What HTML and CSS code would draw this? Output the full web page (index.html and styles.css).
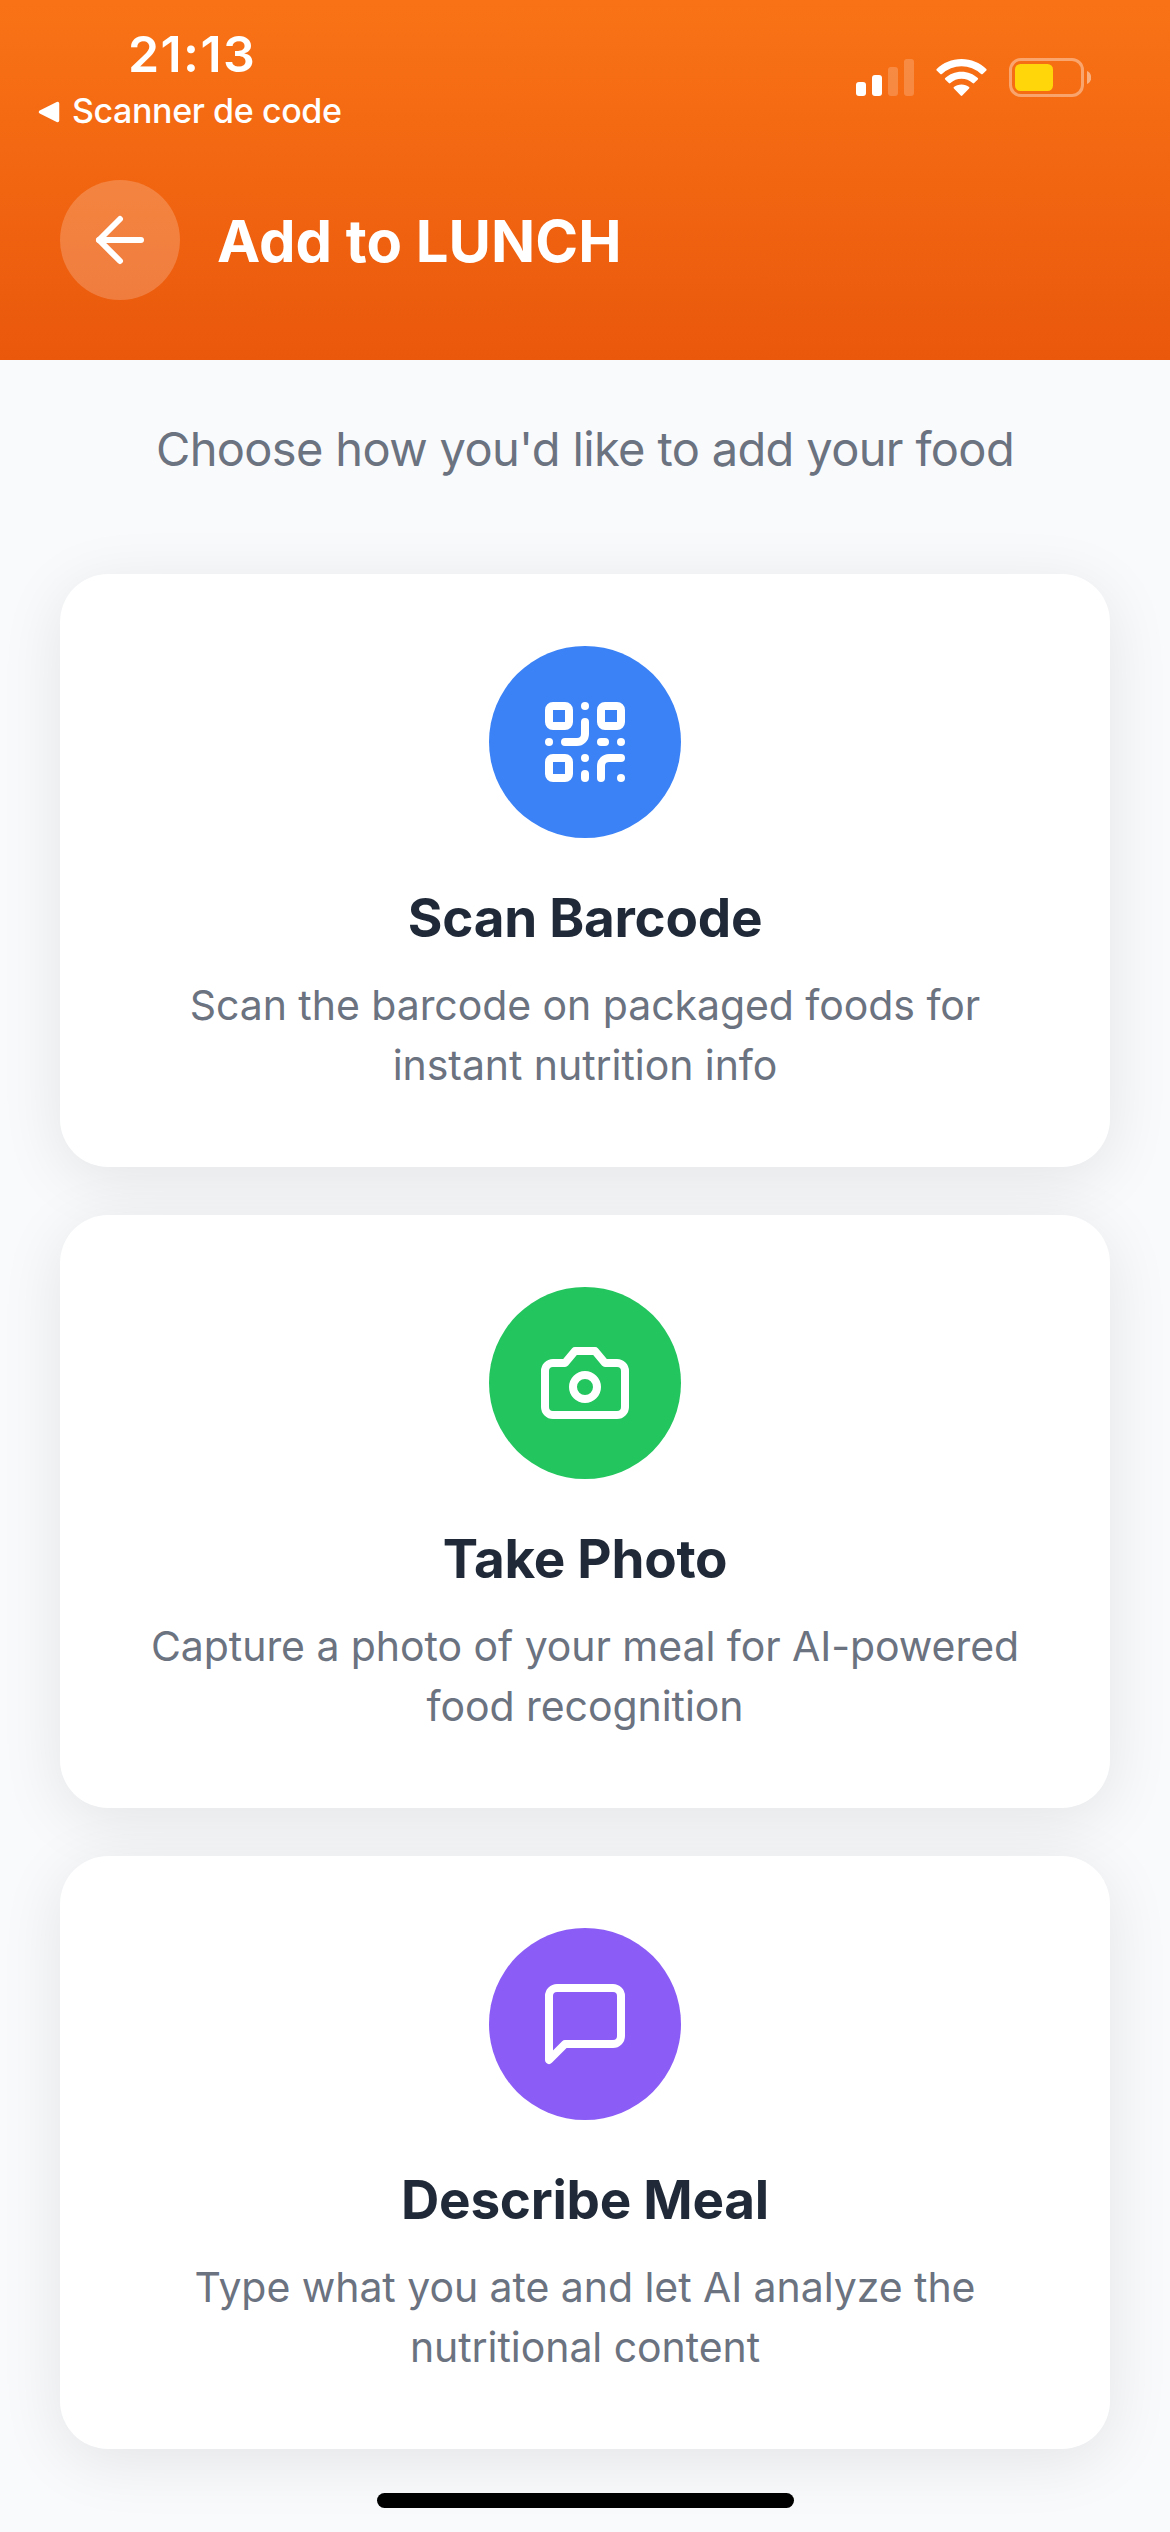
FILE: index.html
```html
<!DOCTYPE html>
<html lang="en">
<head>
<meta charset="utf-8">
<title>Add to LUNCH</title>
<link rel="stylesheet" href="styles.css">
</head>
<body>
<div class="screen">
  <header class="header">
    <div class="status-bar">
      <div class="status-left">
        <div class="time">21:13</div>
        <div class="return-link">
          <svg class="return-arrow" viewBox="0 0 22 22"><path d="M19.5 2.5v17L2.5 11z" fill="#fff" stroke="#fff" stroke-width="3.5" stroke-linejoin="round"/></svg>
          <span>Scanner de code</span>
        </div>
      </div>
      <div class="status-right">
        <svg width="58" height="39" viewBox="0 0 58 39" fill="#fff">
          <rect x="0" y="24" width="10" height="14" rx="3"/>
          <rect x="16" y="17" width="10" height="21" rx="3"/>
          <rect x="32" y="9" width="10" height="29" rx="3" opacity=".2"/>
          <rect x="48" y="1" width="10" height="37" rx="3" opacity=".2"/>
        </svg>
        <svg width="51" height="39" viewBox="0 0 51 39" fill="#fff">
          <path d="M25.500 1.000C35.200 1.000 43.900 4.800 50.300 10.900Q51 11.700 50.300 12.500L46.700 16.000Q45.900 16.700 45.100 16.000A28.500 28.500 0 0 0 5.900 16.000Q5.100 16.700 4.300 16.000L.7 12.500Q0 11.700.7 10.900C7.100 4.800 15.800 1 25.500 1z"/>
          <path d="M25.500 13.700C31.800 13.700 37.500 16.100 41.800 20.000Q42.600 20.800 41.800 21.600L38.200 25.100Q37.400 25.800 36.600 25.100A16.500 16.500 0 0 0 14.400 25.100Q13.600 25.800 12.800 25.100L9.200 21.600Q8.400 20.800 9.200 20.000C13.500 16.100 19.200 13.700 25.500 13.700z"/>
          <path d="M25.500 26.400C28.500 26.400 31.100 27.400 33.100 29.000Q33.900 29.800 33.100 30.600L26.300 37.500Q25.500 38.300 24.700 37.500L17.900 30.600Q17.100 29.800 17.900 29.000C19.900 27.400 22.500 26.400 25.500 26.400z"/>
        </svg>
        <svg width="82" height="39" viewBox="0 0 82 39">
          <rect x="1.500" y="1.500" width="72" height="36" rx="10.500" fill="none" stroke="#fff" stroke-opacity=".38" stroke-width="3"/>
          <rect x="6" y="6" width="38" height="27" rx="5.500" fill="#ffd60a"/>
          <path d="M78 13c2.600 1 4.200 3.500 4.200 6.500S80.600 25 78 26z" fill="#fff" fill-opacity=".45"/>
        </svg>
      </div>
    </div>
    <div class="nav">
      <button class="back" aria-label="Back">
        <svg class="stroke-icon" width="72" height="72" viewBox="0 0 24 24"><path d="m12 19-7-7 7-7"/><path d="M19 12H5"/></svg>
      </button>
      <h1 class="title">Add to LUNCH</h1>
    </div>
  </header>

  <main class="content">
    <p class="lead">Choose how you'd like to add your food</p>
    <section class="card">
      <div class="badge badge-blue">
        <svg class="stroke-icon" width="96" height="96" viewBox="0 0 24 24">
          <rect width="5" height="5" x="3" y="3" rx="1"/>
          <rect width="5" height="5" x="16" y="3" rx="1"/>
          <rect width="5" height="5" x="3" y="16" rx="1"/>
          <path d="M21 16h-3a2 2 0 0 0-2 2v3"/>
          <path d="M21 21v.01"/>
          <path d="M12 7v3a2 2 0 0 1-2 2H7"/>
          <path d="M3 12h.01"/>
          <path d="M12 3h.01"/>
          <path d="M12 16v.01"/>
          <path d="M16 12h1"/>
          <path d="M21 12v.01"/>
          <path d="M12 21v-1"/>
        </svg>
      </div>
      <h2 class="card-title">Scan Barcode</h2>
      <p class="card-text">Scan the barcode on packaged foods for<br>instant nutrition info</p>
    </section>
    <section class="card">
      <div class="badge badge-green">
        <svg class="stroke-icon" width="96" height="96" viewBox="0 0 24 24">
          <path d="M14.500 4h-5L7 7H4a2 2 0 0 0-2 2v9a2 2 0 0 0 2 2h16a2 2 0 0 0 2-2V9a2 2 0 0 0-2-2h-3l-2.500-3z"/>
          <circle cx="12" cy="13" r="3"/>
        </svg>
      </div>
      <h2 class="card-title">Take Photo</h2>
      <p class="card-text">Capture a photo of your meal for AI-powered<br>food recognition</p>
    </section>
    <section class="card">
      <div class="badge badge-purple">
        <svg class="stroke-icon" width="96" height="96" viewBox="0 0 24 24">
          <path d="M21 15a2 2 0 0 1-2 2H7l-4 4V5a2 2 0 0 1 2-2h14a2 2 0 0 1 2 2z"/>
        </svg>
      </div>
      <h2 class="card-title">Describe Meal</h2>
      <p class="card-text">Type what you ate and let AI analyze the<br>nutritional content</p>
    </section>
  </main>
  <div class="home-indicator"></div>
</div>
</body>
</html>
```

FILE: styles.css
```css
* { box-sizing: border-box; }

body {
  margin: 0;
  background: #f9fafb;
  font-family: Inter, "Liberation Sans", sans-serif;
}

h1, h2, p { margin: 0; }
svg { display: block; flex: none; }

.screen {
  width: 1170px;
  height: 2532px;
  overflow: hidden;
  display: flex;
  flex-direction: column;
  background: #f9fafc;
}

.header {
  height: 360px;
  flex: none;
  color: #fff;
  background: linear-gradient(#f97316, #ea580c);
}

.status-bar {
  height: 180px;
  display: flex;
  justify-content: space-between;
  padding: 24px 79px 0 38px;
}

.time {
  padding-left: 90px;
  font-size: 50px;
  line-height: 60px;
  font-weight: 600;
  letter-spacing: 1.4px;
}

.return-link {
  display: flex;
  align-items: center;
  gap: 12px;
  margin-top: 6px;
  font-size: 34px;
  line-height: 42px;
  font-weight: 500;
  letter-spacing: -0.4px;
}

.return-arrow { width: 22px; height: 22px; margin-top: 2px; }

.status-right {
  display: flex;
  align-items: flex-start;
  gap: 22px;
  padding-top: 34px;
}

.nav {
  display: flex;
  align-items: center;
  gap: 37px;
  padding: 0 60px;
}

.back {
  width: 120px;
  height: 120px;
  padding: 0;
  border: 0;
  border-radius: 50%;
  background: rgba(255, 255, 255, 0.2);
  color: #fff;
  display: flex;
  align-items: center;
  justify-content: center;
}

.title {
  padding-top: 2px;
  font-size: 58px;
  line-height: 72px;
  font-weight: 700;
}

.stroke-icon {
  fill: none;
  stroke: #fff;
  stroke-width: 2;
  stroke-linecap: round;
  stroke-linejoin: round;
}

.content {
  display: flex;
  flex-direction: column;
  gap: 48px;
  padding: 60px 60px 0;
}

.lead {
  margin-bottom: 48px;
  text-align: center;
  font-size: 47px;
  line-height: 58px;
  letter-spacing: -0.65px;
  color: #6b7280;
}

.card {
  display: flex;
  flex-direction: column;
  align-items: center;
  padding: 72px 0;
  border-radius: 48px;
  background: #fff;
  box-shadow: 0 12px 64px rgba(0, 0, 0, 0.09);
  text-align: center;
}

.badge {
  width: 192px;
  height: 192px;
  border-radius: 50%;
  display: flex;
  align-items: center;
  justify-content: center;
}

.badge-blue { background: #3b82f6; }
.badge-green { background: #22c55e; }
.badge-purple { background: #8b5cf6; }

.card-title {
  margin: 48px 0 24px;
  font-size: 53px;
  line-height: 65px;
  font-weight: 700;
  letter-spacing: -0.25px;
  color: #1f2937;
}

.card-text {
  font-size: 41px;
  line-height: 60px;
  letter-spacing: -0.06px;
  color: #6b7280;
}

.home-indicator {
  width: 417px;
  height: 15px;
  flex: none;
  margin: 44px auto 0;
  border-radius: 8px;
  background: #000;
}
```
